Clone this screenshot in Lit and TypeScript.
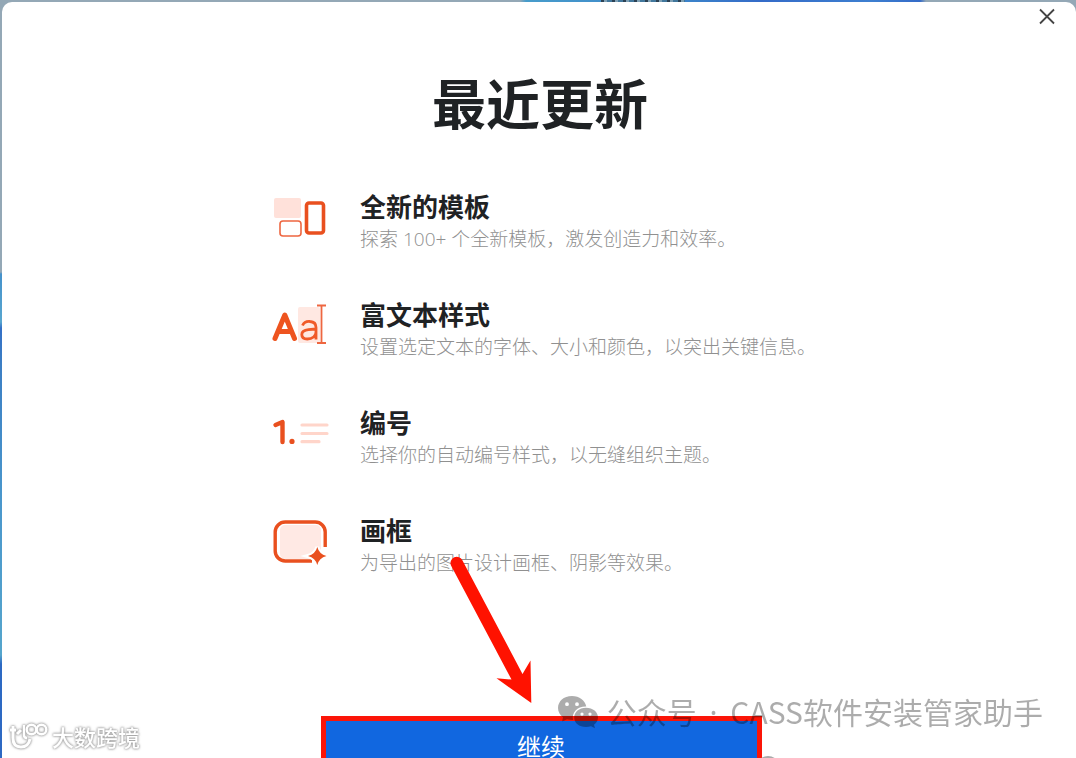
import { LitElement, html, css, svg } from "lit";
import { customElement } from "lit/decorators.js";

const boardsIcon = svg`
  <rect x="4" y="6" width="27" height="20" rx="2" fill="#ffe1da"/>
  <rect x="10" y="29" width="21" height="15" rx="3" fill="#fff" stroke="#ee6640" stroke-width="1.6"/>
  <rect x="36.5" y="11" width="17" height="30" rx="2.5" fill="#fff" stroke="#e9501f" stroke-width="3.6"/>`;

const textIcon = svg`
  <rect x="28" y="7" width="22" height="36" rx="2" fill="#ffe8e2"/>
  <path d="M5 38.500 L14.800 15 L24.500 38.500 M8.500 31.500 H21" fill="none" stroke="#ee541f" stroke-width="5" stroke-linecap="round" stroke-linejoin="round"/>
  <path d="M32.500 25.500 C34 22.300 37 21.200 40 21.500 C44 21.800 46 24 46 27.500 V39.500 M46 29 L38.500 29.700 C34 30.200 31.800 31.800 31.800 34.500 C31.800 37.500 34 39 37.300 39 C42.500 39 46 36 46 32" fill="none" stroke="#f05a29" stroke-width="2.800"/>
  <path d="M47 5.500 H56 M51.500 5.500 V43 M47 43 H56" fill="none" stroke="#ee6640" stroke-width="1.800"/>`;

const numberIcon = svg`
  <path d="M5.500 17 L12.500 14 V34" fill="none" stroke="#e9501f" stroke-width="4.400" stroke-linecap="round" stroke-linejoin="round"/>
  <circle cx="22" cy="33.400" r="2.600" fill="#e9501f"/>
  <path d="M32 17 H57 M32 25.500 H57 M32 33.700 H49" stroke="#ffd5ca" stroke-width="3.200" stroke-linecap="round"/>`;

const frameIcon = svg`
  <rect x="10" y="9" width="41" height="34" rx="5" fill="#ffe9e4"/>
  <path d="M55.200 31 V16 A10 10 0 0 0 45.200 6 H15.200 A10 10 0 0 0 5.200 16 V35 A10 10 0 0 0 15.200 45 H42" fill="none" stroke="#e9501f" stroke-width="3.400"/>
  <path d="M47.300 31 Q49 38 56.500 40 Q49 42 47.300 49 Q45.500 42 38 40 Q45.500 38 47.300 31 Z" fill="#e9501f" stroke="#fff" stroke-width="4" paint-order="stroke"/>`;

const features = [
  { icon: boardsIcon, title: "全新的模板", text: "探索 100+ 个全新模板，激发创造力和效率。" },
  { icon: textIcon, title: "富文本样式", text: "设置选定文本的字体、大小和颜色，以突出关键信息。" },
  { icon: numberIcon, title: "编号", text: "选择你的自动编号样式，以无缝组织主题。" },
  { icon: frameIcon, title: "画框", text: "为导出的图片设计画框、阴影等效果。" },
];

@customElement("app-root")
export class AppRoot extends LitElement {
  static styles = css`
    :host {
      display: block;
      position: relative;
      height: 100vh;
      overflow: hidden;
      box-sizing: border-box;
      padding: 2px 0 0 2px;
      font-family: "Noto Sans CJK SC", sans-serif;
      background:
        repeating-linear-gradient(90deg, #2c4254 0 3px, #7fa0b4 3px 6px, #41779c 6px 11px) 601px 0 / 84px 2px no-repeat,
        linear-gradient(90deg, #94a8b6 520px, #479ccb 526px, #3b82ca 690px, #346bc8 760px, #3d7fd0 870px, #346bc8 920px, #94a8b6 926px) 0 0 / 100% 12px no-repeat,
        linear-gradient(180deg, #94a8b6 272px, #4592cb 274px, #58a6cf 322px, #3470c6 328px, #3c7fc4 366px, #4a97cc 500px, #55a5cc 655px, #2d69c3 664px);
    }
    .window {
      height: 100%;
      overflow: hidden;
      box-sizing: border-box;
      padding-left: 2px;
      display: flex;
      flex-direction: column;
      align-items: center;
      background: #fff;
      border-radius: 10px 10px 0 0;
    }
    .bar {
      align-self: stretch;
      display: flex;
      justify-content: flex-end;
      padding: 0 14px;
      flex: none;
    }
    .close {
      width: 30px;
      height: 30px;
      padding: 0;
      border: 0;
      background: none;
    }
    .close svg { display: block; }
    h1 {
      flex: none;
      margin: 30px 0 0;
      font-size: 54px;
      line-height: 80px;
      font-weight: 700;
      color: #1f2224;
    }
    .features {
      flex: none;
      width: 540px;
      margin: 46px 0 0;
      padding: 0;
      list-style: none;
    }
    .feature {
      display: flex;
      gap: 30px;
      height: 108px;
    }
    .icon { flex: none; width: 60px; height: 52px; margin-top: 4px; }
    .copy { white-space: nowrap; }
    h2 {
      margin: 0;
      font-size: 26px;
      line-height: 36px;
      font-weight: 700;
      color: #1f2224;
    }
    p {
      margin: 0;
      font-family: "Open Sans", "Noto Sans CJK SC", sans-serif;
      font-size: 19px;
      line-height: 30px;
      font-weight: 300;
      color: #909090;
    }
    .continue {
      flex: none;
      width: 441px;
      height: 60px;
      margin: 96px 0 0 2px;
      padding: 0;
      border: 5px solid #fb1508;
      background: #1167e0;
      color: #fff;
      font: 400 24px/36px "Noto Sans CJK SC", sans-serif;
    }
    .arrow {
      position: absolute;
      left: 440px;
      top: 550px;
    }
    .account {
      position: absolute;
      right: 33px;
      bottom: 23px;
      display: flex;
      align-items: center;
      gap: 8px;
      font-size: 30px;
      line-height: 44px;
      color: #000;
      opacity: 0.32;
      white-space: nowrap;
    }
    .middot {
      font-family: "Noto Sans", sans-serif;
      padding: 0 6px;
    }
    .dot {
      position: absolute;
      left: 756px;
      bottom: -22px;
      width: 24px;
      height: 24px;
      border-radius: 50%;
      background: #aaa;
    }
    .brand {
      position: absolute;
      left: 8px;
      bottom: 6px;
      display: flex;
      align-items: center;
      gap: 4px;
      font-size: 22px;
      line-height: 32px;
      font-weight: 500;
      color: #fff;
      filter: drop-shadow(0 0 1px #999) drop-shadow(0 0 1px #bbb);
    }
  `;

  render() {
    return html`
      <main class="window">
        <div class="bar">
          <button class="close" aria-label="关闭">
            <svg width="30" height="30" viewBox="0 0 30 30">
              <path d="M8 7.500 L22 21.500 M22 7.500 L8 21.500" stroke="#444" stroke-width="1.800" />
            </svg>
          </button>
        </div>
        <h1>最近更新</h1>
        <ul class="features">
          ${features.map(
            (f) => html`<li class="feature">
              <svg class="icon" viewBox="0 0 60 52" aria-hidden="true">${f.icon}</svg>
              <div class="copy">
                <h2>${f.title}</h2>
                <p>${f.text}</p>
              </div>
            </li>`
          )}
        </ul>
        <button class="continue">继续</button>
      </main>
      <svg class="arrow" width="110" height="160" viewBox="0 0 110 160" aria-hidden="true">
        <path d="M11 15.500 A6 6 0 0 1 22.500 10.500 L82.500 124 L90.500 110.500 L91.300 153 L56.500 128.300 L71.500 129.500 Z" fill="#ff1200" />
      </svg>
      <div class="dot"></div>
      <div class="account">
        <svg width="42" height="34" viewBox="0 0 42 34" aria-hidden="true">
          <path fill-rule="evenodd" d="M15 1 C6.500 1 1 6.500 1 13 C1 17 3 20 6 22.300 L5.200 26.500 L10 24.200 C12 24.800 13.800 25 16 25 C14.500 17.500 20.500 11.200 29.300 11.500 C28 5.500 22.500 1 15 1 Z M10 7.300 A1.900 1.900 0 1 0 10 11.100 A1.900 1.900 0 1 0 10 7.300 Z M20 7.300 A1.900 1.900 0 1 0 20 11.100 A1.900 1.900 0 1 0 20 7.300 Z" />
          <path fill-rule="evenodd" d="M29 12.800 C22 12.800 17.200 17.200 17.200 22.500 C17.200 28 22 32 29 32 C30.800 32 32.500 31.600 34 31.200 L38 33.300 L37 29.700 C39.500 28 41 25.400 41 22.500 C41 17.200 36 12.800 29 12.800 Z M25 17.500 A1.600 1.600 0 1 0 25 20.700 A1.600 1.600 0 1 0 25 17.500 Z M33 17.500 A1.600 1.600 0 1 0 33 20.700 A1.600 1.600 0 1 0 33 17.500 Z" />
        </svg>
        <span>公众号 <span class="middot">·</span> CASS软件安装管家助手</span>
      </div>
      <div class="brand">
        <svg width="40" height="30" viewBox="0 0 40 30" fill="none" stroke="#fff" stroke-width="3" aria-hidden="true">
          <path d="M2 9 H8 M5 5 V17 C5 23 8 26 13 26 C18 26 21 23 22 18 M13 9 L9 13" />
          <circle cx="23.500" cy="8.500" r="4.800" stroke-width="2.400" />
          <circle cx="33.500" cy="8.500" r="4.800" stroke-width="2.400" />
          <path d="M16 4 V14 C16 16 17 17 19 17" stroke-width="2.400" />
        </svg>
        <span>大数跨境</span>
      </div>
    `;
  }
}
